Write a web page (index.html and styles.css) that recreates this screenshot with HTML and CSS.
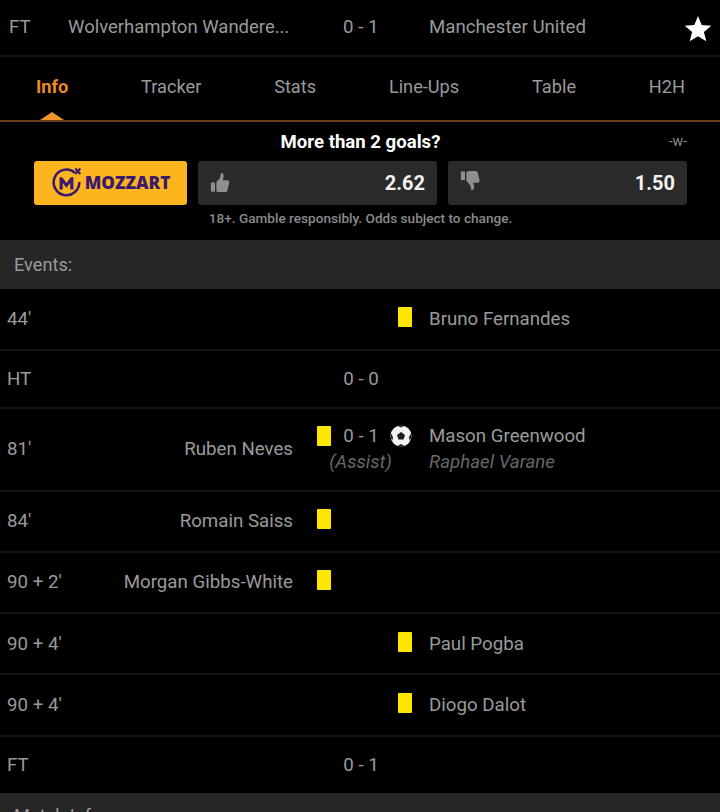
FILE: index.html
```html
<!DOCTYPE html>
<html lang="en">
<head>
<meta charset="utf-8">
<title>Wolverhampton Wanderers 0-1 Manchester United</title>
<link rel="stylesheet" href="styles.css">
</head>
<body>
<header class="match">
  <span class="match-status">FT</span>
  <span class="match-home">Wolverhampton Wandere...</span>
  <span class="match-score">0 - 1</span>
  <span class="match-away">Manchester United</span>
  <svg class="star" viewBox="0 0 28 28" width="28" height="28"><path fill="#fff" d="M14 1l3.700 9 9.600.7-7.400 6.200 2.400 9.400L14 21.200l-8.300 5.100 2.400-9.400L.7 10.700l9.600-.7z"/></svg>
</header>
<nav class="tabs">
  <a class="tab tab-active">Info</a>
  <a class="tab">Tracker</a>
  <a class="tab">Stats</a>
  <a class="tab">Line-Ups</a>
  <a class="tab">Table</a>
  <a class="tab">H2H</a>
</nav>
<section class="odds">
  <div class="odds-head">
    <h2 class="odds-title">More than 2 goals?</h2>
    <span class="odds-mark">-w-</span>
  </div>
  <div class="odds-row">
    <div class="brand">
      <svg class="brand-logo" viewBox="0 0 30 30" width="32" height="32">
        <path d="M22.500 5.500A12 12 0 1 0 26.500 14" fill="none" stroke="#3b1a6b" stroke-width="2.400"/>
        <path d="M8 21V9.500h2.500L14.500 15l4-5.500H21V21h-3v-6l-3.500 4.500-3.500-4.500V21z" fill="#3b1a6b"/>
        <path d="M22.800 1.500l4.700 5M27.500 1.500l-4.700 5" stroke="#3b1a6b" stroke-width="2"/>
      </svg>
      <span class="brand-name">MOZZART</span>
    </div>
    <button class="bet">
      <svg class="bet-icon" viewBox="0 0 22 24" width="20" height="22"><path fill="#8f8f8f" d="M1 11.500h4.500V21.500H1z"/><path fill="#8f8f8f" d="M7 11l4-4.500L12 1c2.500-.3 3.500 2 2.800 5l-.8 3h5.300c1.600 0 2.200 1.300 1.800 2.800l-2 8.400c-.4 1.200-1.300 1.800-2.500 1.800H10c-1.300 0-2-.4-3-1z"/></svg>
      <span class="bet-value">2.62</span>
    </button>
    <button class="bet">
      <svg class="bet-icon bet-icon-down" viewBox="0 0 22 24" width="20" height="22"><path fill="#8f8f8f" d="M1 1.500h4.500V11H1z"/><path fill="#8f8f8f" d="M7 2.500l3-1.500h7c1.300 0 2.200.6 2.600 1.800l1.800 8c.4 1.600-.2 3-1.800 3H14.500l.9 3.500c.6 2.800-.4 5-2.900 5l-1.300-5.500-4.200-5z"/></svg>
      <span class="bet-value">1.50</span>
    </button>
  </div>
  <p class="odds-note">18+. Gamble responsibly. Odds subject to change.</p>
</section>
<h3 class="section">Events:</h3>
<div class="event event-h62">
  <span class="time">44'</span><span class="ic-away"><i class="card"></i></span><span class="away">Bruno Fernandes</span>
</div>
<div class="event event-h58">
  <span class="time">HT</span><span class="score">0 - 0</span>
</div>
<div class="event event-double">
  <span class="time">81'</span><span class="home">Ruben Neves</span><span class="ic-home"><i class="card"></i></span><span class="score">0 - 1</span>
  <span class="ic-away"><svg class="ball" viewBox="0 0 22 22" width="22" height="22"><circle cx="11" cy="11" r="10.500" fill="#f2f2f2"/><path fill="#1c1c1c" d="M11 7l4 2.900-1.500 4.700h-5L7 9.900zM8 .9l3 1.600 3-1.600c-1.900-.6-4.100-.6-6 0zM1.200 8.500l1.900 4-.9 3.300C.8 13.600.5 11 1.200 8.500zM20.800 8.500l-1.900 4 .9 3.300c1.400-2.200 1.700-4.800 1-7.300zM7.500 20.900l3.500-1.900 3.500 1.900c-2.200.7-4.800.7-7 0z"/></svg></span>
  <span class="away">Mason Greenwood</span>
  <span class="assist-label">(Assist)</span><span class="assist-name">Raphael Varane</span>
</div>
<div class="event event-h61 event-raised">
  <span class="time">84'</span><span class="home">Romain Saiss</span><span class="ic-home"><i class="card"></i></span>
</div>
<div class="event event-h61 event-raised">
  <span class="time">90 + 2'</span><span class="home">Morgan Gibbs-White</span><span class="ic-home"><i class="card"></i></span>
</div>
<div class="event event-h61">
  <span class="time">90 + 4'</span><span class="ic-away"><i class="card"></i></span><span class="away">Paul Pogba</span>
</div>
<div class="event event-h62">
  <span class="time">90 + 4'</span><span class="ic-away"><i class="card"></i></span><span class="away">Diogo Dalot</span>
</div>
<div class="event event-h56 event-last">
  <span class="time">FT</span><span class="score">0 - 1</span>
</div>
<h3 class="section section-next">Match Info:</h3>
</body>
</html>
```

FILE: styles.css
```css
* { box-sizing: border-box; }
html, body { margin: 0; height: 812px; overflow: hidden; }
body { background: #000; color: #9a9a9a; font-family: Roboto, "Liberation Sans", sans-serif; font-size: 18.7px; line-height: 24px; }

.match { display: grid; grid-template-columns: 59px 275px 86px 1fr 36px; align-items: center; height: 57px; padding: 0 0 2px 9px; border-bottom: 2px solid #141414; }
.match-status, .match-home, .match-score, .match-away { white-space: nowrap; }
.match-home { font-size: 18.5px; }
.star { margin-top: 5px; }

.tabs { display: flex; justify-content: space-between; align-items: center; height: 65px; padding: 0 35px 3px 36px; border-bottom: 2px solid #6b3d1a; font-size: 18.2px; }
.tab { color: #9a9a9a; }
.tab-active { color: #e8892a; font-weight: 700; position: relative; align-self: stretch; display: flex; align-items: center; }
.tab-active::after { content: ""; position: absolute; left: 50%; bottom: -3px; margin-left: -12px; border: 12px solid transparent; border-top: 0; border-bottom: 8px solid #f0952c; }

.odds { height: 118px; padding: 6px 33px 0 34px; }
.odds-head { display: flex; justify-content: center; position: relative; height: 33px; }
.odds-title { margin: 0; color: #fff; font-size: 18.6px; font-weight: 700; line-height: 28px; }
.odds-mark { position: absolute; right: 0; top: 4px; font-size: 14px; line-height: 18px; color: #8a8a8a; }
.odds-row { display: grid; grid-template-columns: 153px 239px 239px; gap: 11px; height: 44px; }
.brand { display: flex; align-items: center; justify-content: center; gap: 2px; background: #fdb51f; border-radius: 3px; }
.brand-logo { flex: none; }
.brand-name { color: #3b1a6b; font-family: "Open Sans", sans-serif; font-weight: 800; font-size: 17.2px; line-height: 24px; }
.bet { display: flex; align-items: center; justify-content: space-between; padding: 0 12px; background: #2a2a2a; border: 0; border-radius: 3px; font: inherit; }
.bet-icon-down { margin-top: -4px; }
.bet-value { color: #f2f2f2; font-size: 20px; font-weight: 700; }
.odds-note { margin: 4px 0 0; text-align: center; font-size: 13.6px; line-height: 18px; font-weight: 500; color: #8a8a8a; }

.section { display: flex; align-items: center; margin: 0; height: 49px; padding: 0 14px; background: #262626; font-weight: 400; font-size: 18.2px; color: #9a9a9a; }
.section-next { align-items: flex-start; padding-top: 11px; }

.event { display: grid; grid-template-columns: 100px 193px 50px 36px 50px 1fr; align-items: center; border-bottom: 2px solid #141414; white-space: nowrap; }
.event-last { border-bottom: 0; }
.event-raised { padding-bottom: 2px; }
.event-h56 { height: 56px; }
.event-h58 { height: 58px; }
.event-h61 { height: 61px; }
.event-h62 { height: 62px; }
.event-double { height: 83px; grid-template-rows: 32px 20px; align-content: start; padding-top: 11px; }
.time { grid-column: 1; padding-left: 7px; }
.home { grid-column: 2; text-align: right; }
.ic-home { grid-column: 3; display: flex; justify-content: flex-end; padding-right: 12px; }
.score { grid-column: 4; text-align: center; }
.ic-away { grid-column: 5; display: flex; justify-content: flex-start; padding-left: 19px; }
.away { grid-column: 6; }
.card { display: block; width: 14px; height: 20px; margin-bottom: 4px; background: #ffe600; border-radius: 1px; }
.ball { margin-left: -8px; }
.event-double .card { margin-bottom: 0; }
.event-double .time, .event-double .home { grid-row: 1 / 3; padding-top: 5px; }
.assist-label { grid-column: 3 / 6; grid-row: 2; text-align: center; font-style: italic; color: #666; padding-right: 1px; }
.assist-name { grid-column: 6; grid-row: 2; font-style: italic; color: #666; }
```
